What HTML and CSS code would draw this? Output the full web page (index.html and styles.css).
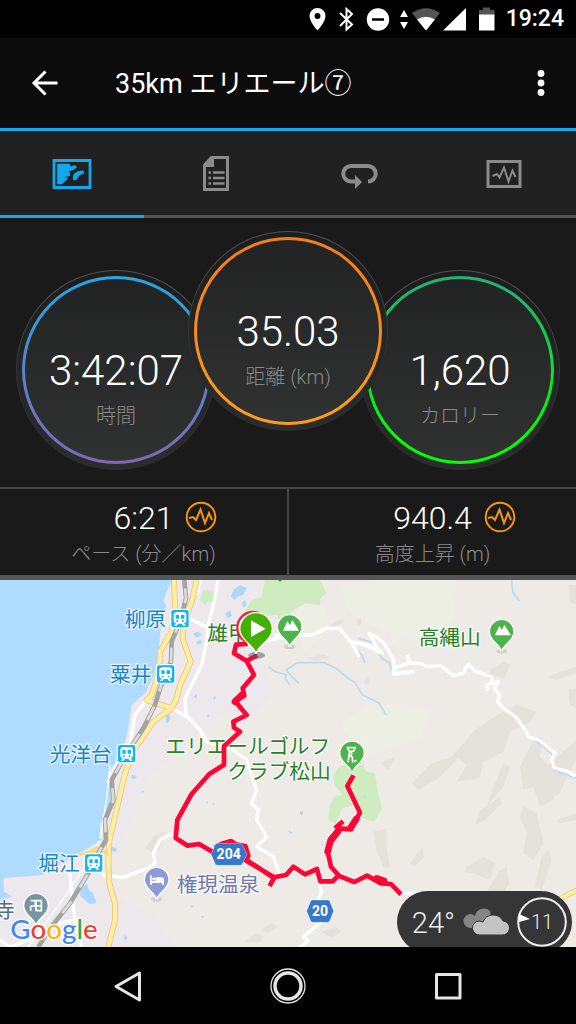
FILE: index.html
```html
<!DOCTYPE html>
<html lang="ja">
<head>
<meta charset="utf-8">
<meta name="viewport" content="width=device-width, initial-scale=1">
<title>35km エリエール⑦</title>
<link rel="stylesheet" href="styles.css">
</head>
<body>
<div class="status">
  <svg width="168" height="38" viewBox="0 0 168 38" aria-hidden="true">
    <path fill="#fff" fill-rule="evenodd" d="M18.500 8a8 8 0 0 0-8 8c0 6 8 14.500 8 14.500s8-8.500 8-14.500a8 8 0 0 0-8-8zm0 5a3 3 0 1 1 0 6 3 3 0 0 1 0-6z"/>
    <path fill="none" stroke="#fff" stroke-width="2" d="M41 13l12 11.500-5.500 5V9l5.500 5L41 26"/>
    <circle cx="79" cy="19.500" r="11.200" fill="#fff"/><path stroke="#000" stroke-width="2.500" d="M73 19.500h12"/>
    <path fill="#fff" d="M105 10l4 7h-8zM105 29l4-7h-8z"/>
    <path fill="#555" d="M127 30.500L113 13q14-9.500 28 0z"/><path fill="#fff" d="M127 30.500l-9-11q9-5.500 18 0z"/>
    <path fill="#fff" d="M144 30.500L167 8v22.500z"/>
  </svg>
  <svg class="battery" width="16" height="38" viewBox="0 0 16 38" aria-hidden="true"><path fill="#555" d="M0 10h4V7.500h7V10h4.500v6H0z"/><path fill="#fff" d="M0 14.500h15.500v16H0z"/></svg>
  <time>19:24</time>
</div>
<header class="appbar">
  <button class="icon-btn" aria-label="戻る"><svg width="28" height="28" viewBox="0 0 28 28"><path fill="none" stroke="#fff" stroke-width="3" d="M26.500 14H3M14.500 2.500L3 14l11.500 11.500"/></svg></button>
  <h1>35km エリエール⑦</h1>
  <button class="icon-btn more" aria-label="その他"><svg width="10" height="28" viewBox="0 0 10 28"><g fill="#fff"><circle cx="5" cy="4.500" r="3.400"/><circle cx="5" cy="14" r="3.400"/><circle cx="5" cy="23.500" r="3.400"/></g></svg></button>
</header>
<nav class="tabs">
  <button class="tab active" aria-label="マップ"><svg width="40" height="40" viewBox="0 0 40 40"><path fill="none" stroke="currentColor" stroke-width="2.800" d="M2 6.500h36v27H2z"/><path fill="currentColor" stroke="currentColor" stroke-width=".6" stroke-linejoin="round" d="M5.300 10h12l1.400 2.700 4.300-1.400 1.700 2-3.400 2.400-4.600 1.600L18 20l-.7 2-5 .7 3.400 2-4.400 4L10 30H5.300zM21 24l1-4 4-2.500 5-.8 1 2.600-4.500 1.700L24 26h-2.500z"/></svg></button>
  <button class="tab" aria-label="詳細"><svg width="28" height="38" viewBox="0 0 28 38"><path fill="none" stroke="currentColor" stroke-width="3" d="M9.500 2.500h16v32h-23V10z"/><path fill="currentColor" d="M9 2h3v10H2v-3z"/><path stroke="currentColor" stroke-width="2.600" d="M6.500 17.500H9M11 17.500h11.500M6.500 23H9M11 23h11.500M6.500 28.500H9M11 28.500h11.500"/></svg></button>
  <button class="tab" aria-label="ラップ"><svg width="38" height="38" viewBox="0 0 38 38"><path fill="none" stroke="currentColor" stroke-width="4" d="M16 26.500h-6a7.750 7.750 0 0 1 0-15.500h17a7.750 7.750 0 0 1 0 15.500"/><path fill="currentColor" d="M14 20l7 7-7 7z"/></svg></button>
  <button class="tab" aria-label="グラフ"><svg width="36" height="30" viewBox="0 0 36 30"><path fill="none" stroke="currentColor" stroke-width="3" d="M2 2.500h32v25H2z"/><path fill="none" stroke="currentColor" stroke-width="2" d="M6.500 17l4.500-2 2.500 3.500L18 8.500l4.500 14 4-11 3 6.500"/></svg></button>
</nav>
<main>
  <section class="gauges">
    <div class="gauge time"><div class="ring"><b>3:42:07</b><span>時間</span></div></div>
    <div class="gauge distance"><div class="ring"><b>35.03</b><span>距離 (km)</span></div></div>
    <div class="gauge calories"><div class="ring"><b>1,620</b><span>カロリー</span></div></div>
  </section>
  <section class="stats">
    <div class="stat">
      <div class="stat-row"><b>6:21</b><button class="chart" aria-label="ペースのグラフ"><svg width="32" height="32" viewBox="0 0 32 32"><g fill="none" stroke="#f7950d" stroke-width="2"><circle cx="16" cy="16" r="14.300"/><path d="M4 17l4-1 3 3 4.500-10.500L20 22l4-10 3 7"/></g></svg></button></div>
      <span>ペース (分／km)</span>
    </div>
    <div class="stat">
      <div class="stat-row"><b>940.4</b><button class="chart" aria-label="高度のグラフ"><svg width="32" height="32" viewBox="0 0 32 32"><g fill="none" stroke="#f7950d" stroke-width="2"><circle cx="16" cy="16" r="14.300"/><path d="M4 17l4-1 3 3 4.500-10.500L20 22l4-10 3 7"/></g></svg></button></div>
      <span>高度上昇 (m)</span>
    </div>
  </section>
  <section class="map">
    <svg class="map-canvas" viewBox="0 0 1728 1101" role="img" aria-label="コースマップ">
      <defs>
        <g id="station"><rect x="-28" y="-28" width="56" height="56" rx="8" fill="#10b5f5" stroke="#fff" stroke-width="4"/><path fill="#fff" fill-rule="evenodd" d="M-19-11q0-9 9-9h20q9 0 9 9v17q0 7-7 8l6 7h-8l-5-6h-10l-5 6h-8l6-7q-7-1-7-8zM-13-11v11h10v-11zM3-11v11h10v-11zM-11 5h5v5h-5zM6 5h5v5h-5z"/></g>
        <g id="pin"><path stroke="#fff" stroke-width="4" d="M0 59C-5 35-37 28-37-1a37 37 0 0 1 74 0C37 28 5 35 0 59z"/></g>
      </defs>
      <rect width="1728" height="1101" fill="#eeebe6"/>
      <path fill="#ece8ec" d="M515 0H850l20 70-60 100-20 80 30 90-60 70-100-10-60 60-90 80-70 60-50 130-60 110 40 120 90 40 60 90-30 111H0V890z"/>
      <path fill="#edeee4" d="M1020 20l130-20h220l-10 120-100 60-120-30-90-50zM1020 430l100-60 170 20-30 80-180 60zM880 60l90 10 20 80-80 70zM1150 90l80 40-50 70z"/>
      <path fill="#aedbff" d="M0 0h516l-16 35-9 30 8 12-17 60-5 73-12 70-30 60-40 35-14 90-17 55-40 60 12 60-10 50-26 40 4 50-70 42-112 64-112 8 2 40 24 16-36 12z"/>
      <path fill="#ceecbf" d="M600 60l10-30 40 5-10 35-15-7-10 12zM725 110l30-50 30-10 10-50h165l20 40-20 15v20l-45-5-40 25-25 50-20-40-80 5zM1000 585l15-25 70-15 15 30 25 5 10 65 12 40-25 40-30-10-30-40-35 10-20 45-22-10 3-40 15-30 25-5-25-30z"/>
      <g fill="#e5e2dc">
        <path d="M985 138l30-18h15v10l-38 12zM920 235l50-12 20 8-40 12zM1470 270l40-25 20 10-15 40-45-10zM1500 400l50-25 60 20-20 30-60 30-20 60-60 30-10 50-70 10 30-50-25-20-60 60-60 35-20-20 60-60 60-20 70-80zM1705 15h23v60l-20-10zM1640 290l30-10 58-20v20l-60 20zM1705 330l23-5v60l-18-10zM1560 560l40-80 30-10-10 60 60 60-20 70-40 20-20-60-30 10zM1480 620l30-70 20 10-20 60-50 60zM1440 690l60-40 5 20-50 50-30 15zM1570 680l40 20 20 90-30 50-30-20 10-60-20-50zM1500 870l20-10 8 50-40 60-30-30zM1400 860l50-30 35 20-15 50-50-20-25-5zM1640 560l88-80v60l-50 100-40 30zM1670 720l58-20v20l-50 10zM1625 830l20-20 10 30-30 90-20-10zM1120 755l40-10v60l10 60-20-5-20-50zM1230 850l38-50 5 30-30 30zM1140 550l45-20-20 40z"/>
        <path d="M435 805l30-40 35-10-20 50-20 15zM735 1085l30-25 25 8-10 20zM780 1050l35-20 18 10-30 20zM965 1055l40-15 20 15-30 20z"/>
        <ellipse cx="1100" cy="302" rx="7" ry="12"/><ellipse cx="1077" cy="126" rx="7" ry="10"/><ellipse cx="875" cy="200" rx="14" ry="7"/>
      </g>
      <g fill="none" stroke="#b7dbf5" stroke-width="5" stroke-linejoin="round">
        <path d="M1535 0l3 35 20 28M858 270l35-22h80l40 20 30 27 20 10 25 40 50 25 20 35M858 270l38 40M805 260l20 15 35 10-5 10 15 20M1055 190l30 35 10 25M1075 175l50 15 20 45 25 15 5 30M1570 450l90 75M1660 570l68 25"/>
      </g>
      <g fill="#abd8fb">
        <path d="M700 30l20-15 20 10-10 20-20 5-5 10-12-10zM725 70l10-10 5 15-10 8zM676 100l15-8 5 15-15 8zM580 160l12-5 15 10-20 8zM590 185l12-6 5 10-15 5zM498 405l8-5 5 15-8 15-5-5zM242 920l20-8 5 18 12 10 10 28-20 5-28-25zM395 585l15 3-5 10-10-3zM335 800l18 8-10 8-10-5zM375 1065l8 8-5 8-8-8zM640 360l4-15 4 10zM620 410l5-8 4 8zM582 350l8-8v15z"/>
        <path d="M900 692l10 3-2 10-8-3zM966 780l4 20-5-5zM1093 645l5 10-6-3zM865 750l12 8-5 5zM570 975l10 4-5 4zM602 1010l8-3v6zM585 905l8 6-6 4zM640 665l4 10h-6zM618 667l5-5v10zM425 630l8 5-6 3z"/>
      </g>
      <g fill="none" stroke="#fff" stroke-width="10" stroke-linejoin="round" stroke-linecap="round">
        <path d="M655 0l-15 75-15 60-5 50-15 70-30 60-20 40 3 50 42 45 20 35 80 25 40 30 20 60 10 30-15 40 20 20-5 30 30 50-30 30 50 30 20 55M515 385l43 25M440 360l-35 45-10 60-5 30-40 60-25 50M570 118l50 22 100 30 140-5 78 0 40-20h40l35 42 45 5 40 25M310 885l60 7 70-27 25-15-5-30 20-40 30-18 20 13M210 880l5 60 10 80 20 81M0 1080l30 21 80-30 60-40 50-10M600 0l-8 40"/>
        <path d="M1053 185l22 42-18-42 20 5 55 20 15 10-15-15-25-45 20 10 25 20 15 25 15 30-3 35 60-5-58 8 5-20 45-15-8-18 5 20 33 0 20 10 40-3 20 15 20 15 30-8 5-15 10-10 20 20 50 17v20l-18 5 5 12 2-15 30-8-12 20 15 20-5 20 15 18 40 28 25 35 15 25 30 10 35 30 12 8-10 20 8 25 40 10 20 12M1015 885l50 20M960 920l5 15-15 30-10 20M960 1030l-50 40 15 12-25 19M1190 940h80"/>
      </g>
      <path fill="none" stroke="#fff" stroke-width="4" d="M330 555l-10 100-20 120M300 780l-45 80-60 90-110 150"/>
      <g fill="none" stroke-linejoin="round">
        <g stroke="#e9c86e" stroke-width="18"><path d="M522 0l3 85-10 70-35 60-2 60-23 70-15 15 75 25"/><path d="M590 0l-15 65-23 60-4 50 24 70-32 70-10 40-15 30-55 40-55 80-20 45-15 50-25 110-17 70-3 60 3 70 17 60v50l-20 81"/></g>
        <g stroke="#ffeda7" stroke-width="13"><path d="M522 0l3 85-10 70-35 60-2 60-23 70-15 15 75 25"/><path d="M590 0l-15 65-23 60-4 50 24 70-32 70-10 40-15 30-55 40-55 80-20 45-15 50-25 110-17 70-3 60 3 70 17 60v50l-20 81"/><path stroke-width="8" stroke="#f7da72" d="M235 825l35-10 25-15M265 825l30-15 30 12"/></g>
        <path stroke="#ffeda7" stroke-width="14" d="M1670 963l58-30"/><path stroke="#eed078" stroke-width="3" d="M1670 954l58-30M1676 966l52-26"/>
        <path stroke="#a3a3a3" stroke-width="14" d="M553 0l5 55-18 70-25 60-2 60-33 80-15 50-35 70-30 45-40 65-25 45 5 60-25 60 3 60-18 30-35 70-55 90-60 75-35 56"/>
        <path stroke="#dcdcdc" stroke-width="8" stroke-dasharray="45 48" stroke-dashoffset="-25" d="M553 0l5 55-18 70-25 60-2 60-33 80-15 50-35 70-30 45-40 65-25 45 5 60-25 60 3 60-18 30-35 70-55 90-60 75-35 56"/>
      </g>
      <text class="label green" x="622" y="183">雄甲山</text>
      <path fill="#eeebe6" d="M768 120h55v75h-55z"/>
      <path stroke="#fff" stroke-width="10" d="M795 183l50-10"/>
      <g class="label blue">
        <text x="374" y="140">柳原</text><text x="330" y="307">粟井</text><text x="149" y="546">光洋台</text><text x="115" y="872">堀江</text>
      </g>
      <text class="label green" x="1256" y="195">高縄山</text>
      <text class="label green" x="496" y="521">エリエールゴルフ</text>
      <text class="label green" x="682" y="597">クラブ松山</text>
      <text class="label violet" x="530" y="936">権現温泉</text>
      <text class="label slate" x="-18" y="1013">寺</text>
      <use href="#station" x="540" y="116"/><use href="#station" x="497" y="282"/><use href="#station" x="380" y="521"/><use href="#station" x="281" y="849"/>
      <g fill="#b9b4a8" opacity=".5"><ellipse cx="868" cy="200" rx="16" ry="7"/><ellipse cx="1505" cy="214" rx="16" ry="7"/><ellipse cx="470" cy="958" rx="16" ry="7"/></g>
      <use href="#pin" x="869" y="142" fill="#4eb34c"/><use href="#pin" x="1505" y="156" fill="#4eb34c"/><use href="#pin" x="1056" y="521" fill="#4eb34c"/><use href="#pin" x="470" y="900" fill="#8e9ad8"/><use href="#pin" x="108" y="978" fill="#7896a2"/>
      <g fill="#fff"><path d="M849 152l13-28 8 12 7-16 20 32zM1485 166l13-28 8 12 7-16 20 32z"/><path d="M450 886h5v16h12v-10h17q8 0 8 8v15h-5v-6h-32v6h-5zM457 893h9v7h-9z"/></g>
      <g fill="none" stroke="#fff" stroke-width="5"><path d="M1040 503h28M1042 504l6 10 13-1 4-7M1049 514l-2 13 10 4 1 17M1047 527l-3 20M1055 514l-1 13"/><path d="M92 962h14v16h18v14h-15M108 962v32M92 978v14M92 978h16M108 962h16v16"/></g>
      <circle cx="1066" cy="543" r="4" fill="#fff"/>
      <path fill="#43a53e" d="M835 0h10l-5 7z"/>
      <g fill="none" stroke="#ff0536" stroke-width="14" stroke-linejoin="round" stroke-linecap="square">
        <path d="M766 229l-26 14-38-23 6-26 28-2M740 243l22 42-34 40 5 22-28 16 35 42-40 20 2 18 18 12-48 44v55l-44 28-53 60-43 78-5 54 36 23 34-5 43 25 95 20 87 57-10 18M650 800l15-9 28-8 15 10 28 5 9 30-10 12 87 52 36-7 22-25 35 23 36-16 10 37h37l17-17 48 19 38-19 42 23 30 2 25 26M1015 885l-22-25-10-45 10-40 25-30 35 3 27-50-38-80 15-26M1010 740l14-12"/>
        <path stroke-width="20" stroke-linecap="round" d="M725 345l-20 20M983 815l9-35M995 778l20-25M1053 741l16-24M1130 895l22 8"/>
      </g>
      <circle cx="759" cy="143" r="47" fill="#fff" stroke="#ff1942" stroke-width="7"/>
      <ellipse cx="770" cy="226" rx="25" ry="10" fill="#555" opacity=".5"/>
      <path fill="#44af00" stroke="#fff" stroke-width="4" d="M768 222C764 197 719 180 719 147a49 49 0 0 1 98 0C817 180 772 197 768 222z"/><path fill="#fff" d="M753 121l44 25-44 25z"/>
      <g fill="#3679cb" stroke="#fff" stroke-opacity=".5" stroke-width="2"><path d="M652 790h69q4 0 6 4l14 29-14 29q-2 4-6 4h-69q-4 0-6-4l-13-29 13-29q2-4 6-4z"/><path d="M938 960h45q4 0 6 4l12 29-12 30q-2 4-6 4h-45q-4 0-6-4l-12-30 12-29q2-4 6-4z"/></g>
      <g class="route"><text x="686" y="838">204</text><text x="960" y="1008">20</text></g>
      <text class="google" x="31" y="1076"><tspan fill="#4285f4">G</tspan><tspan fill="#ea4335">o</tspan><tspan fill="#fbb605">o</tspan><tspan fill="#4285f4">g</tspan><tspan fill="#34a853">l</tspan><tspan fill="#ea4335">e</tspan></text>
    </svg>
    <div class="weather">
      <span class="temp">24°</span>
      <svg width="46" height="28" viewBox="0 0 46 28" aria-hidden="true"><path fill="#858585" d="M8 20a7 7 0 0 1-1-14q3 0 5 2a9 9 0 0 1 15-5l1 6-8 13z"/><path fill="#c4c4c4" stroke="#363636" stroke-width="1" d="M17 27a7 7 0 0 1-1-14l4 1a11 11 0 0 1 20-1 7 7 0 0 1-1 14z"/></svg>
      <span class="wind"><svg width="50" height="50" viewBox="0 0 50 50" aria-hidden="true"><circle cx="25" cy="25" r="23.800" fill="none" stroke="#eee" stroke-width="2"/><path fill="#fff" d="M2 17l11 5-11 3z"/></svg><span>11</span></span>
    </div>
  </section>
</main>
<footer class="navbar">
  <button aria-label="戻る"><svg width="36" height="36" viewBox="0 0 36 36"><path fill="none" stroke="#e6e6e6" stroke-width="3" stroke-linejoin="round" d="M29.500 5v27L6 18.500z"/></svg></button>
  <button aria-label="ホーム"><svg width="36" height="36" viewBox="0 0 36 36"><g fill="none" stroke="#e6e6e6"><circle cx="18" cy="18" r="13" stroke-width="3.500"/><circle cx="18" cy="18" r="17" stroke-width="1.300"/></g></svg></button>
  <button aria-label="最近のアプリ"><svg width="36" height="36" viewBox="0 0 36 36"><path fill="none" stroke="#e6e6e6" stroke-width="3" stroke-linejoin="round" d="M6.500 6.500h23.500v23.500H6.500z"/></svg></button>
</footer>
</body>
</html>
```
FILE: styles.css
```css
* { box-sizing: border-box; }
body {
  margin: 0;
  min-height: 100vh;
  display: flex;
  flex-direction: column;
  background: #000;
  color: #fff;
  font-family: Roboto, "Noto Sans CJK JP", sans-serif;
}
button {
  display: flex;
  align-items: center;
  justify-content: center;
  padding: 0;
  border: 0;
  background: none;
  color: inherit;
  cursor: pointer;
}
svg { display: block; flex: none; }

.status {
  display: flex;
  justify-content: flex-end;
  align-items: center;
  height: 38px;
  padding-right: 12px;
}
.battery { margin: 0 11px 0 12px; }
.status time { font-size: 23px; font-weight: 500; line-height: 40px; }

.appbar {
  display: flex;
  align-items: center;
  height: 93px;
  background: #0c0c0c;
  border-bottom: 3px solid #11a9ed;
}
.icon-btn { width: 56px; height: 56px; margin-left: 17px; }
.icon-btn.more { width: 40px; margin: 0 15px; }
.appbar h1 {
  flex: 1;
  margin: 2px 0 0 42px;
  font-size: 27px;
  font-weight: 400;
  line-height: 40px;
}

.tabs { display: flex; background: #212121; }
.tab {
  flex: 1;
  height: 87px;
  padding-top: 2px;
  border-bottom: 3px solid #555;
  color: #8b8b8b;
}
.tab.active { color: #11a9ed; border-color: #11a9ed; }

main { background: #1a1a1a; }
.gauges {
  display: flex;
  justify-content: center;
  padding: 13px 0 17px;
  background: linear-gradient(#151515, #1a1a1a 8px);
}
.gauge {
  flex: none;
  width: 200px;
  height: 200px;
  margin: 39px -14px 0;
  padding: 5px;
  border: 1px solid transparent;
  border-radius: 50%;
  background:
    linear-gradient(#1d1d1d, #2b2d2c) padding-box,
    linear-gradient(#505050, #2b2d2c 70%) border-box;
}
.distance { z-index: 1; margin-top: 0; margin-bottom: 39px; }
.ring {
  height: 100%;
  padding-top: 68px;
  border: 3px solid transparent;
  border-radius: 50%;
  text-align: center;
  background:
    linear-gradient(#222423, #303231) padding-box,
    linear-gradient(var(--from), var(--to)) border-box;
}
.time { --from: #27a5e2; --to: #7e68b6; }
.distance { --from: #f47b20; --to: #fa9f1b; }
.calories { --from: #27ae78; --to: #00ff00 85%; }
.ring b { display: block; font-size: 42px; font-weight: 300; line-height: 48px; }
.ring span { display: block; margin-top: 6px; }
.ring span, .stat > span { font-size: 20px; font-weight: 300; line-height: 30px; color: #8a8a8a; }

.stats { display: flex; border-top: 2px solid #454545; border-bottom: 5px solid #555; }
.stat { flex: 1; height: 86px; padding-top: 8px; text-align: center; }
.stat + .stat { border-left: 2px solid #454545; }
.stat-row { display: grid; grid-template-columns: 1fr auto 1fr; align-items: center; height: 42px; }
.stat-row b { grid-column: 2; font-size: 32px; font-weight: 300; }
.chart { justify-self: start; margin: -2px 0 0 12px; }

.map { position: relative; overflow: hidden; }
.map-canvas { width: 100%; height: auto; }
.label {
  font-family: "Noto Sans CJK JP", sans-serif;
  font-size: 62px;
  paint-order: stroke;
  stroke: #fff;
  stroke-width: 8px;
  stroke-opacity: .7;
  stroke-linejoin: round;
}
.blue { fill: #1b86c5; }
.green { fill: #2a8228; }
.violet { fill: #7079ae; }
.slate { fill: #546e7a; }
.route { font-size: 42px; font-weight: 700; fill: #fff; text-anchor: middle; }
.google {
  font-family: Lato, sans-serif;
  font-size: 83px;
  font-weight: 500;
  paint-order: stroke;
  stroke: #fff;
  stroke-width: 8px;
}
.weather {
  position: absolute;
  right: 4px;
  bottom: -6px;
  display: flex;
  align-items: center;
  gap: 8px;
  height: 62px;
  padding: 0 5px 0 15px;
  border-radius: 31px;
  background: #363636;
  color: #eee;
  font-weight: 300;
}
.temp { font-size: 29px; line-height: 36px; padding-top: 2px; }
.wind { display: grid; place-items: center; }
.wind > * { grid-area: 1 / 1; }
.wind span { font-size: 20px; }

.navbar { display: flex; justify-content: center; align-items: center; height: 77px; }
.navbar button { width: 160px; height: 77px; }
```
